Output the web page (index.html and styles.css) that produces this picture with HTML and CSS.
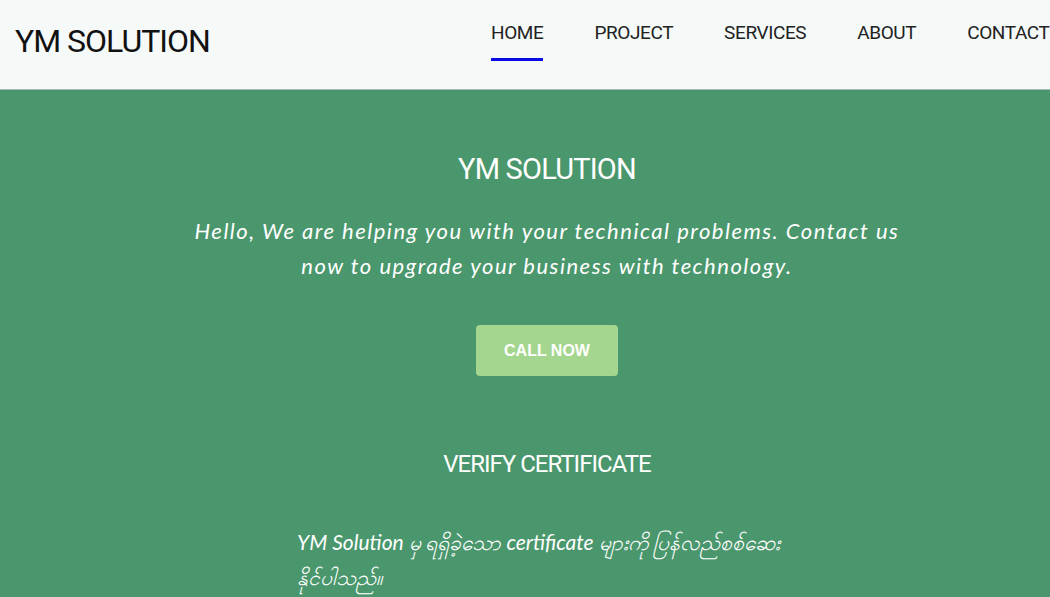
FILE: index.html
```html
<!DOCTYPE html>
<html lang="en">
<head>
<meta charset="utf-8">
<title>YM Solution</title>
<link rel="stylesheet" href="styles.css">
</head>
<body>
<div class="page">
  <header class="site-header">
    <div class="logo">YM SOLUTION</div>
    <nav class="nav">
      <a class="nav-link active" href="#">HOME</a>
      <a class="nav-link" href="#">PROJECT</a>
      <a class="nav-link" href="#">SERVICES</a>
      <a class="nav-link" href="#">ABOUT</a>
      <a class="nav-link" href="#">CONTACT</a>
    </nav>
  </header>
  <main class="hero">
    <h1 class="hero-title">YM SOLUTION</h1>
    <p class="hero-text">Hello, We are helping you with your technical problems. Contact us now to upgrade your business with technology.</p>
    <a class="btn-call" href="#">CALL NOW</a>
    <h2 class="verify-title">VERIFY CERTIFICATE</h2>
    <p class="verify-text">YM Solution မှ ရရှိခဲ့သော certificate များကို ပြန်လည်စစ်ဆေးနိုင်ပါသည်။</p>
  </main>
</div>
</body>
</html>
```
FILE: styles.css
```css
* { box-sizing: border-box; }
html, body { margin: 0; padding: 0; }
body {
  font-family: "Roboto", "Lato", sans-serif;
  overflow: hidden;
}
.page {
  width: 1094px;
  height: 597px;
  background: #4a976d;
}
.site-header {
  height: 90px;
  background: #f5f9f8;
  border-bottom: 1px solid #a9b8b2;
  display: flex;
  align-items: flex-start;
  padding: 0 0 0 15px;
}
.logo {
  flex: 0 0 476px;
  font-size: 32px;
  font-weight: 400;
  letter-spacing: -1px;
  color: #111;
  margin-top: 21px;
  line-height: 40px;
}
.nav {
  display: flex;
  gap: 51px;
  margin-top: 21px;
}
.nav-link {
  font-size: 19px;
  letter-spacing: -0.4px;
  color: #222;
  text-decoration: none;
  line-height: 24px;
  padding-bottom: 13px;
  border-bottom: 3px solid transparent;
}
.nav-link.active { border-bottom-color: #0a0ae6; }
.hero {
  display: flex;
  flex-direction: column;
  align-items: center;
  color: #fff;
  padding-top: 61px;
}
.hero-title {
  margin: 0;
  font-size: 29px;
  font-weight: 400;
  letter-spacing: -0.8px;
  line-height: 36px;
}
.hero-text {
  margin: 26px 0 0;
  width: 730px;
  text-align: center;
  font-family: "Lato", sans-serif;
  font-style: italic;
  font-size: 22px;
  line-height: 35px;
  letter-spacing: 1.5px;
}
.btn-call {
  margin-top: 42px;
  width: 142px;
  height: 51px;
  display: flex;
  align-items: center;
  justify-content: center;
  background: #a5d68f;
  border-radius: 4px;
  color: #fff;
  text-decoration: none;
  font-family: "Liberation Sans", Arial, sans-serif;
  font-weight: 700;
  font-size: 16px;
}
.verify-title {
  margin: 73px 0 0;
  font-size: 24px;
  font-weight: 400;
  letter-spacing: -1px;
  line-height: 30px;
}
.verify-text {
  margin: 45px 0 0;
  width: 500px;
  font-family: "Lato", sans-serif;
  font-style: italic;
  font-weight: 400;
  font-size: 21px;
  line-height: 35px;
  text-align: left;
}
```
